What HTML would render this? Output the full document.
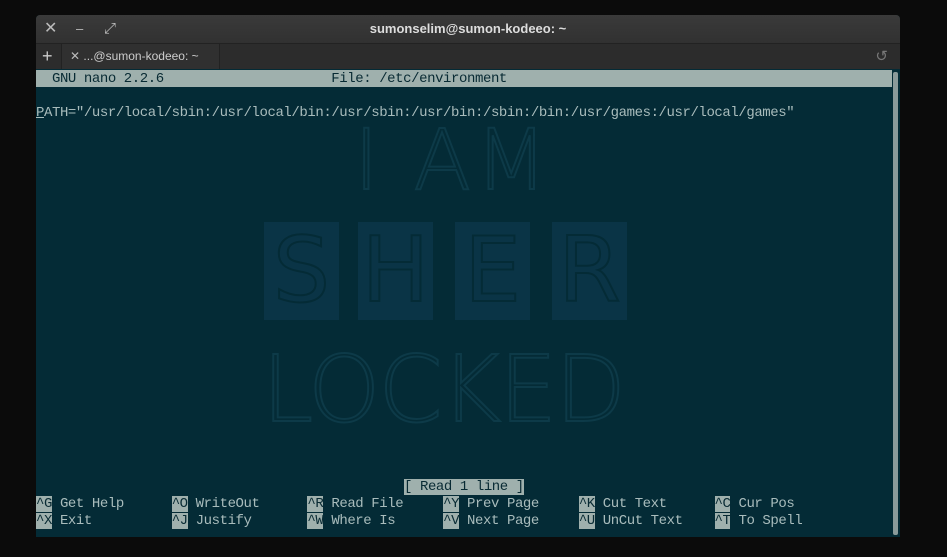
<html><head><style>
body{margin:0;width:947px;height:557px;background:#0b0b0b;position:relative;overflow:hidden;font-family:"Liberation Sans",sans-serif}
.win{position:absolute;left:36px;top:15px;width:864px;height:522px;background:#042b36;border-radius:4px 4px 0 0;overflow:hidden}
.title{position:absolute;left:0;top:0;width:864px;height:28px;background:linear-gradient(#3a3a3a,#313131);color:#ddd;font-size:13px;font-weight:bold;text-align:center;line-height:28px;border-bottom:1px solid #222}
.tabs{position:absolute;left:0;top:29px;width:864px;height:25px;background:#2c2c2c}
.tab{position:absolute;left:25px;top:0;width:157px;height:25px;background:#303030;border-left:1px solid #222;border-right:1px solid #222;color:#ccc;font-size:12px;line-height:25px}
.term{position:absolute;left:0;top:55px;width:864px;height:467px;font-family:"Liberation Mono",monospace;font-size:14px;letter-spacing:-0.42px;color:#a9bcbc}
.row{position:absolute;left:0;height:17px;line-height:18px;white-space:pre}
.hl{background:#9fb0ad;color:#082a33}
.wm{position:absolute;color:transparent;-webkit-text-stroke:2px #0d3a48;font-family:"DejaVu Sans",sans-serif;font-weight:200;letter-spacing:0}
.box{position:absolute;background:#0a3446;top:152px;width:75px;height:98px;color:transparent;font-size:90px;line-height:98px;text-align:center;-webkit-text-stroke:2px #042b36;font-family:"DejaVu Sans",sans-serif;letter-spacing:0}
</style></head><body>
<div class="win">
<div class="title">sumonselim@sumon-kodeeo: ~
<span style="position:absolute;left:8px;top:0;font-weight:normal;color:#bbb;font-size:16px">✕</span>
<span style="position:absolute;left:40px;top:0;font-weight:normal;color:#bbb">–</span>
<span style="position:absolute;left:68px;top:0;font-weight:normal;color:#bbb;font-size:15px">⤢</span></div>
<div class="tabs"><span style="position:absolute;left:6px;top:0;color:#ccc;font-size:18px;line-height:25px">+</span>
<div class="tab"><span style="margin-left:8px;color:#bbb">✕</span> ...@sumon-kodeeo: ~</div>
<span style="position:absolute;right:12px;top:3px;color:#777;font-size:15px">↺</span></div>
<div class="term">
<div class="wm" style="left:318px;top:50px;font-size:84px;line-height:80px;letter-spacing:4px">I AM</div>
<div class="box" style="left:228px">S</div><div class="box" style="left:322px">H</div><div class="box" style="left:419px">E</div><div class="box" style="left:516px">R</div>
<div class="wm" style="left:226px;top:280px;font-size:92px;line-height:80px;letter-spacing:-2px">LOCKED</div>
<div class="row hl" style="top:0;width:856px">  GNU nano 2.2.6                     File: /etc/environment</div>
<div class="row" style="top:34px"><span style="text-decoration:underline">P</span>ATH="/usr/local/sbin:/usr/local/bin:/usr/sbin:/usr/bin:/sbin:/bin:/usr/games:/usr/local/games"</div>
<div class="row" style="top:408px;left:368px"><span class="hl">[ Read 1 line ]</span></div>
<div class="row" style="top:425px"><span class="hl">^G</span> Get Help      <span class="hl">^O</span> WriteOut      <span class="hl">^R</span> Read File     <span class="hl">^Y</span> Prev Page     <span class="hl">^K</span> Cut Text      <span class="hl">^C</span> Cur Pos</div>
<div class="row" style="top:442px"><span class="hl">^X</span> Exit          <span class="hl">^J</span> Justify       <span class="hl">^W</span> Where Is      <span class="hl">^V</span> Next Page     <span class="hl">^U</span> UnCut Text    <span class="hl">^T</span> To Spell</div>
<div style="position:absolute;left:857px;top:2px;width:5px;height:463px;background:#8a9a9a;border-radius:2px"></div>
</div></div>
</body></html>
